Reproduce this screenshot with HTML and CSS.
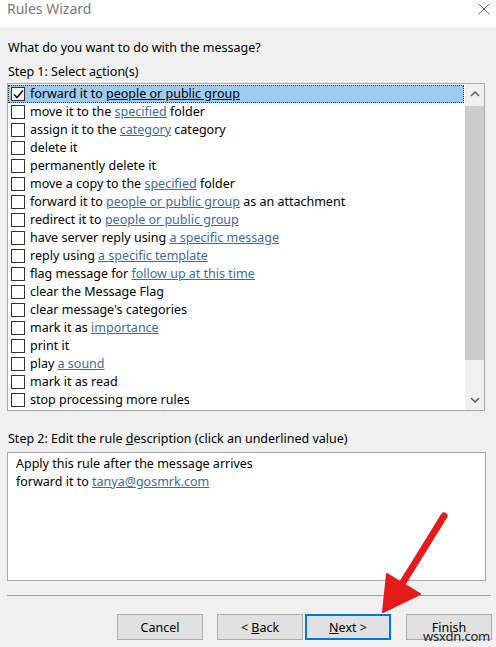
FILE: index.html
```html
<!DOCTYPE html>
<html lang="en">
<head>
    <meta charset="UTF-8">
    <title>Rules Wizard</title>
    <link rel="stylesheet" href="styles.css">
</head>
<body>
    <div class="window">
        <div class="titlebar">
            <span class="title">Rules Wizard</span>
            <svg class="close" width="12" height="12" viewBox="0 0 12 12">
                <path d="M0.5 0.5 L11.5 11.5 M11.5 0.5 L0.5 11.5" stroke="#6d6d6d" stroke-width="1" fill="none"/>
            </svg>
        </div>

        <div class="content">
            <p class="prompt">What do you want to do with the message?</p>
            <p class="label">Step 1: Select a<u>c</u>tion(s)</p>

            <div class="listbox">
                <ul class="actions">
                    <li class="selected"><span class="check"><svg width="11" height="11" viewBox="0 0 11 11"><path d="M1 5.5 L4 8.5 L10 1.5" stroke="#111" stroke-width="1.6" fill="none"/></svg></span><span>forward it to <a>people or public group</a></span></li>
                    <li><span class="check"></span><span>move it to the <a>specified</a> folder</span></li>
                    <li><span class="check"></span><span>assign it to the <a>category</a> category</span></li>
                    <li><span class="check"></span><span>delete it</span></li>
                    <li><span class="check"></span><span>permanently delete it</span></li>
                    <li><span class="check"></span><span>move a copy to the <a>specified</a> folder</span></li>
                    <li><span class="check"></span><span>forward it to <a>people or public group</a> as an attachment</span></li>
                    <li><span class="check"></span><span>redirect it to <a>people or public group</a></span></li>
                    <li><span class="check"></span><span>have server reply using <a>a specific message</a></span></li>
                    <li><span class="check"></span><span>reply using <a>a specific template</a></span></li>
                    <li><span class="check"></span><span>flag message for <a>follow up at this time</a></span></li>
                    <li><span class="check"></span><span>clear the Message Flag</span></li>
                    <li><span class="check"></span><span>clear message's categories</span></li>
                    <li><span class="check"></span><span>mark it as <a>importance</a></span></li>
                    <li><span class="check"></span><span>print it</span></li>
                    <li><span class="check"></span><span>play <a>a sound</a></span></li>
                    <li><span class="check"></span><span>mark it as read</span></li>
                    <li><span class="check"></span><span>stop processing more rules</span></li>
                </ul>
                <div class="scrollbar">
                    <div class="arrow">
                        <svg width="10" height="6" viewBox="0 0 10 6"><path d="M1 5 L5 1 L9 5" stroke="#606060" stroke-width="1.5" fill="none"/></svg>
                    </div>
                    <div class="track"><div class="thumb"></div></div>
                    <div class="arrow">
                        <svg width="10" height="6" viewBox="0 0 10 6"><path d="M1 1 L5 5 L9 1" stroke="#606060" stroke-width="1.5" fill="none"/></svg>
                    </div>
                </div>
            </div>

            <p class="label step2">Step 2: Edit the rule <u>d</u>escription (click an underlined value)</p>
            <div class="description">
                <div>Apply this rule after the message arrives</div>
                <div>forward it to <a>tanya@gosmrk.com</a></div>
            </div>

            <hr class="separator">

            <div class="buttons">
                <button>Cancel</button>
                <button class="gap-small">&lt; <u>B</u>ack</button>
                <button class="default"><u>N</u>ext &gt;</button>
                <button class="gap-big">Finish</button>
            </div>
        </div>

        <!-- callout arrow pointing at Next -->
        <svg class="pointer" width="120" height="120" viewBox="0 0 120 120">
            <path d="M64 8 L22 76" stroke="#e41b1b" stroke-width="7" stroke-linecap="round" fill="none"/>
            <path d="M3 104 L7 66 L40 86 Z" fill="#e41b1b" stroke="#e41b1b" stroke-width="2" stroke-linejoin="round"/>
        </svg>
        <span class="watermark">wsxdn.com</span>
    </div>
</body>
</html>
```

FILE: styles.css
```css
* {
    margin: 0;
    padding: 0;
    box-sizing: border-box;
}

body {
    font-family: "Segoe UI", "Noto Sans", "Open Sans", sans-serif;
    font-size: 12.5px;
    color: #000;
    background: #f0f0f0;
    width: 496px;
    height: 647px;
    overflow: hidden;
}

.window {
    position: relative;
    height: 647px;
}

.titlebar {
    height: 27px;
    background: #fff;
    display: flex;
    align-items: flex-start;
    justify-content: space-between;
    padding: 0 6px 0 7px;
}

.title {
    font-size: 14px;
    line-height: 18px;
    color: #7b7b7b;
}

.close {
    margin-top: 3px;
}

.content {
    padding: 0 4px 0 7px;
}

.prompt {
    line-height: 18px;
    margin-top: 12px;
    padding-left: 1px;
}

.label {
    line-height: 18px;
    margin-top: 6px;
    padding-left: 1px;
}

.listbox {
    width: 478px;
    height: 328px;
    margin-top: 2px;
    border: 1px solid #a9a9a9;
    background: #fff;
    display: flex;
}

.actions {
    list-style: none;
    flex: 1;
    padding-top: 1px;
}

.actions li {
    height: 18px;
    line-height: 16px;
    display: flex;
    align-items: center;
    white-space: nowrap;
    padding-left: 2px;
    margin-right: 1px;
    border: 1px dotted transparent;
}

.actions li.selected {
    background: #9ecbf0;
    border-color: #333;
}

.check {
    width: 14px;
    height: 14px;
    border: 1px solid #333;
    background: #fff;
    margin-right: 5px;
    display: flex;
    align-items: center;
    justify-content: center;
    flex-shrink: 0;
}

a {
    color: #3d6c9e;
    text-decoration: underline;
}

.selected a {
    color: #000;
}

.scrollbar {
    width: 19px;
    background: #f0f0f0;
    display: flex;
    flex-direction: column;
}

.arrow {
    height: 20px;
    display: flex;
    align-items: center;
    justify-content: center;
}

.track {
    flex: 1;
    padding-top: 2px;
}

.thumb {
    height: 254px;
    background: #cdcdcd;
}

.step2 {
    margin-top: 19px;
}

.description {
    width: 479px;
    height: 129px;
    margin-top: 4px;
    border: 1px solid #a9a9a9;
    background: #fff;
    padding: 2px 8px;
    line-height: 18px;
}

.separator {
    border: none;
    border-top: 1px solid #a0a0a0;
    width: 484px;
    margin-top: 14px;
}

.buttons {
    display: flex;
    justify-content: flex-end;
    margin-top: 18px;
}

button {
    font-family: inherit;
    font-size: 12.5px;
    width: 86px;
    height: 26px;
    background: #e1e1e1;
    border: 1px solid #adadad;
    color: #000;
}

.gap-small {
    margin-left: 14px;
}

.default {
    margin-left: 2px;
    border: 2px solid #0078d7;
}

.gap-big {
    margin-left: 15px;
}

.pointer {
    position: absolute;
    left: 380px;
    top: 508px;
}

.watermark {
    position: absolute;
    left: 423px;
    top: 627px;
    font-size: 13px;
    color: #222;
    letter-spacing: -0.2px;
}
```
